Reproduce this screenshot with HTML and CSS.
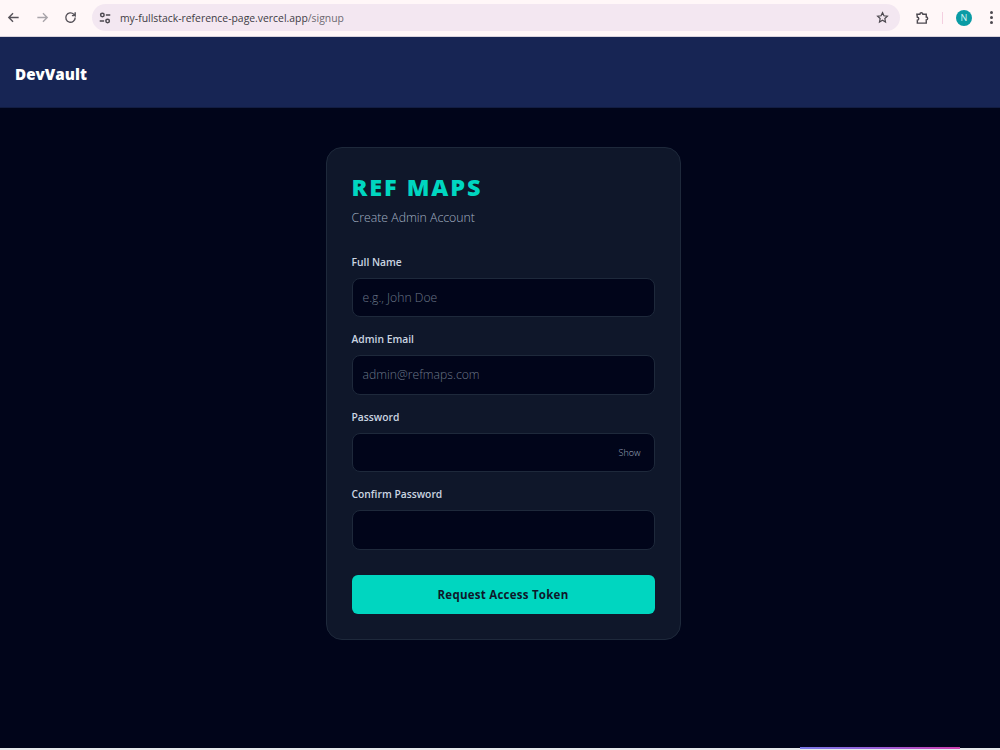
FILE: index.html
```html
<!DOCTYPE html>
<html lang="en">
<head>
<meta charset="utf-8">
<title>DevVault</title>
<link rel="stylesheet" href="styles.css">
</head>
<body>
<div class="chrome">
  <svg class="nav" viewBox="0 0 16 16"><path d="M13.500 8H3M7.500 3.500 3 8l4.500 4.500"/></svg>
  <svg class="nav nav-off" viewBox="0 0 16 16"><path d="M2.500 8H13M8.500 3.500 13 8l-4.500 4.500"/></svg>
  <svg class="nav" viewBox="0 0 16 16"><path d="M13 8a5 5 0 1 1-1.500-3.500L13 6V2.500M13 6H9.500"/></svg>
  <div class="omnibox">
    <svg class="tune" viewBox="0 0 16 16"><circle cx="5" cy="4.500" r="2"/><path d="M9 4.500h5M2 11.500h5"/><circle cx="11" cy="11.500" r="2"/></svg>
    <span class="url">my-fullstack-reference-page.vercel.app<span class="url-path">/signup</span></span>
    <svg class="star" viewBox="0 0 16 16"><path d="M8 2l1.800 3.900 4.200.5-3.100 2.900.8 4.200L8 11.400l-3.700 2.100.8-4.200L2 6.400l4.200-.5z"/></svg>
  </div>
  <svg class="ext" viewBox="0 0 16 16"><path d="M2 4.500h3.200a1.600 1.600 0 0 1 3.200 0H12v3a1.500 1.500 0 0 1 0 3v3.500H2.500v-3.200a1.500 1.500 0 0 0 0-3z"/></svg>
  <span class="sep"></span>
  <span class="avatar">N</span>
  <span class="kebab"><i></i><i></i><i></i></span>
</div>
<header class="topbar"><span class="brand">DevVault</span></header>
<main class="stage">
  <form class="card">
    <h1 class="title">REF MAPS</h1>
    <p class="subtitle">Create Admin Account</p>
    <div class="field">
      <label class="label">Full Name</label>
      <div class="input"><span class="placeholder">e.g., John Doe</span></div>
    </div>
    <div class="field">
      <label class="label">Admin Email</label>
      <div class="input"><span class="placeholder">admin@refmaps.com</span></div>
    </div>
    <div class="field">
      <label class="label">Password</label>
      <div class="input input-end"><span class="show">Show</span></div>
    </div>
    <div class="field">
      <label class="label">Confirm Password</label>
      <div class="input"></div>
    </div>
    <div class="submit">Request Access Token</div>
  </form>
</main>
<div class="strip"><span class="strip-active"></span></div>
</body>
</html>
```
FILE: styles.css
```css
* { box-sizing: border-box; }
html, body { margin: 0; height: 100%; }
body { width: 1000px; height: 750px; overflow: hidden; background: #01051a; font-family: "Open Sans", "Liberation Sans", sans-serif; display: flex; flex-direction: column; }
.chrome { height: 37px; flex: none; background: #fff7f8; display: flex; align-items: center; padding: 0 0 1px 6px; border-bottom: 1px solid #d8d3dc; }
.nav { width: 15px; height: 15px; fill: none; stroke: #57535a; stroke-width: 1.500; margin-right: 13.500px; }
.nav-off { stroke: #a9a5aa; }
.omnibox { width: 808px; height: 27px; margin-left: .500px; border-radius: 14px; background: #f3e7f1; display: flex; align-items: center; padding: 0 11px 0 6px; }
.tune { width: 14px; height: 14px; fill: none; stroke: #4d4950; stroke-width: 1.700; margin-right: 8px; }
.url { font-size: 10.400px; color: #403c44; flex: 1; }
.url-path { color: #6e6a72; }
.star { width: 13px; height: 13px; fill: none; stroke: #4d4950; stroke-width: 1.500; }
.ext { width: 15px; height: 15px; fill: none; stroke: #4d4950; stroke-width: 1.500; margin-left: 15px; }
.sep { width: 1px; height: 12px; background: #f4cfe0; margin-left: 12px; }
.avatar { width: 16px; height: 16px; border-radius: 50%; background: #0a9ba5; color: #d6f3f3; font-size: 9px; display: flex; align-items: center; justify-content: center; margin-left: 13px; }
.kebab { display: flex; flex-direction: column; gap: 2px; margin-left: 18px; }
.kebab i { width: 3px; height: 3px; border-radius: 50%; background: #4d4950; }
.topbar { height: 71px; flex: none; background: #172554; border-bottom: 1px solid #121d42; display: flex; align-items: center; padding: 3px 15px 0; }
.brand { color: #fff; font-size: 15.200px; font-weight: 800; }
.stage { flex: 1; display: flex; justify-content: center; align-items: flex-start; padding: 39px 0 0 6px; }
.card { width: 355px; height: 493px; background: #0f172a; border: 1px solid #1e293b; border-radius: 16px; padding: 25px; }
.title { margin: 0; color: #00d6c0; font-size: 23.500px; line-height: 28px; font-weight: 800; letter-spacing: 1.900px; }
.subtitle { margin: 9px 0 0; color: #a3b0c2; font-size: 12.300px; line-height: 16px; font-weight: 300; }
.subtitle + .field { margin-top: 26.500px; }
.field { margin-bottom: 13px; }
.label { display: block; color: #cbd5e1; font-size: 10.300px; line-height: 18px; font-weight: 600; margin-bottom: 7px; }
.input { height: 39.670px; background: #01051a; border: 1px solid #1e293b; border-radius: 8px; display: flex; align-items: center; padding: 0 10px; }
.input-end { justify-content: flex-end; padding-right: 13px; }
.placeholder { color: #6b7688; font-size: 12.200px; font-weight: 300; }
.show { color: #a3b0c2; font-size: 9px; font-weight: 300; }
.submit { height: 38.500px; margin-top: 25px; background: #00d6c0; border-radius: 6px; color: #0f172a; font-size: 11.500px; font-weight: 700; display: flex; align-items: center; justify-content: center; letter-spacing: .250px; }
.strip { height: 2px; flex: none; background: #e6eaec; position: relative; }
.strip-active { position: absolute; left: 800px; width: 160px; top: -1px; height: 2px; background: linear-gradient(90deg, #7a7ae8, #9a60d8, #d040b0); }
```
